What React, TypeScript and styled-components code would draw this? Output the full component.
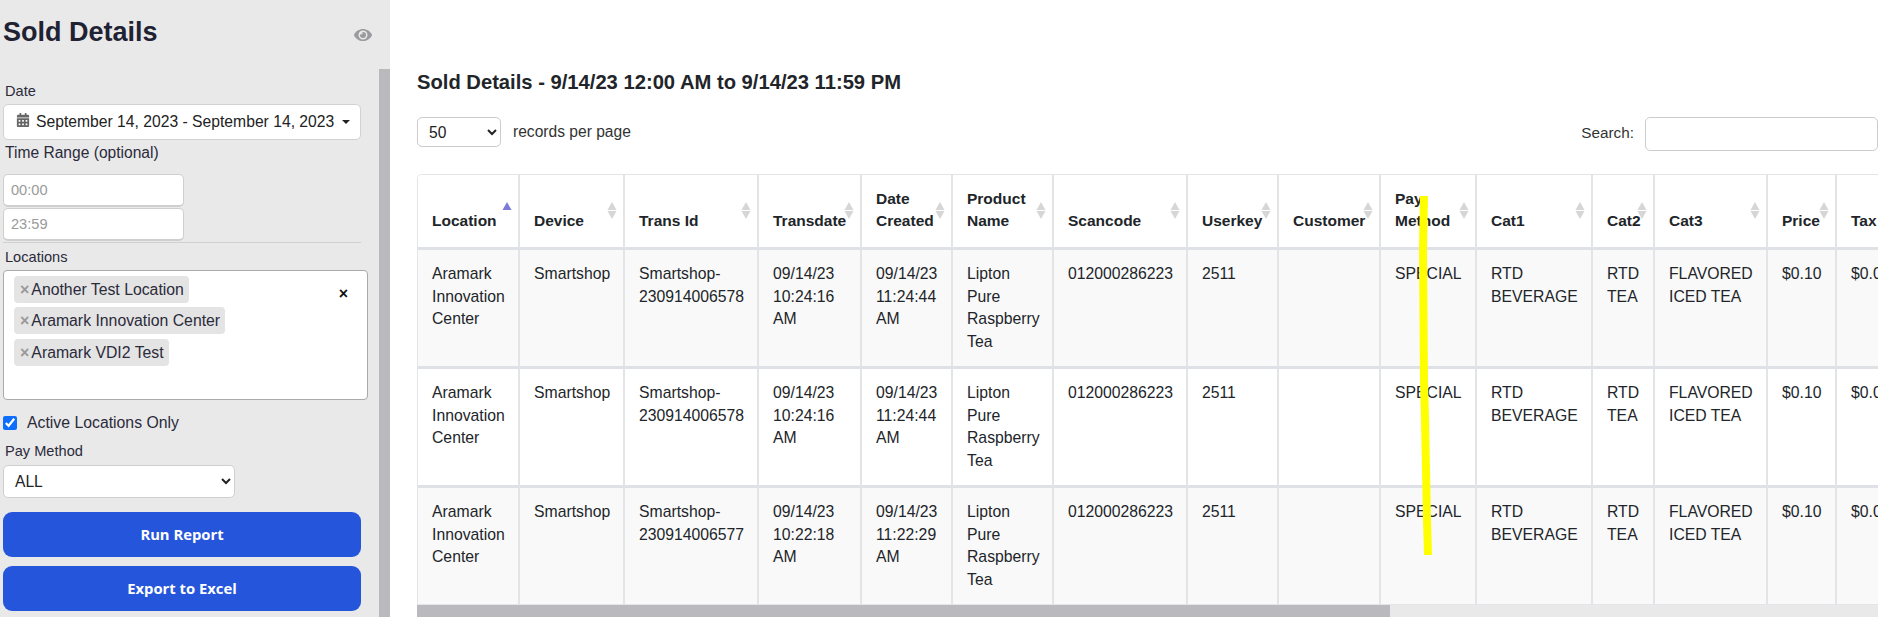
import React from "react";
import styled, { createGlobalStyle } from "styled-components";
import { FaCalendarAlt, FaEye } from "react-icons/fa";

const GlobalStyle = createGlobalStyle`
	html, body {
		margin: 0;
		padding: 0;
		width: 1890px;
		height: 617px;
		overflow: hidden;
		background: #fff;
		color: #212529;
		font-family: "Liberation Sans", Arial, sans-serif;
	}
	* {
		box-sizing: border-box;
	}
`;

const Page = styled.div`
	position: relative;
	display: flex;
	width: 1890px;
	height: 617px;
	overflow: hidden;
`;

const Sidebar = styled.aside`
	flex: 0 0 390px;
	height: 617px;
	background: #e9e9ea;
	display: flex;
	flex-direction: column;
`;

const SidebarHead = styled.div`
	flex: 0 0 69px;
	display: flex;
	align-items: flex-start;
	justify-content: space-between;
	padding: 15px 18px 0 3px;
	color: #9b9b9f;
`;

const Title = styled.h1`
	margin: 0;
	font-size: 27px;
	line-height: 34px;
	font-weight: 700;
	color: #1f2233;
`;

const EyeWrap = styled.span`
	display: block;
	margin-top: 11px;
	font-size: 18px;
	line-height: 0;
`;

const SidebarBody = styled.div`
	flex: 1;
	display: flex;
	min-height: 0;
`;

const Form = styled.div`
	flex: 1;
	padding: 13px 0 0 3px;
	min-width: 0;
`;

const SideThumb = styled.div`
	flex: 0 0 11px;
	background: #b9b9be;
`;

const FieldLabel = styled.div<{ $top?: number; $size?: number }>`
	margin: ${(p) => p.$top ?? 0}px 0 0 2px;
	font-size: ${(p) => p.$size ?? 14.6}px;
	line-height: 18px;
	color: #2b2b3a;
`;

const DateButton = styled.div`
	display: flex;
	align-items: center;
	width: 358px;
	height: 36px;
	margin-top: 4px;
	padding-left: 12px;
	background: #fff;
	border: 1px solid #d2d2d2;
	border-radius: 5px;
	font-size: 15.7px;
	color: #222;
	white-space: nowrap;
`;

const CalendarGlyph = styled.span`
	display: flex;
	margin: -5px 6px 0 0;
	font-size: 14px;
	color: #666;
`;

const Caret = styled.span`
	margin-left: 8px;
	border-top: 4px solid #222;
	border-left: 4px solid transparent;
	border-right: 4px solid transparent;
`;

const TimeInput = styled.input<{ $top?: number }>`
	display: block;
	width: 181px;
	height: 33px;
	margin-top: ${(p) => p.$top ?? 0}px;
	margin-bottom: 1px;
	padding: 0 7px;
	background: #fff;
	border: 1px solid #cfcfcf;
	border-bottom-width: 2px;
	border-radius: 5px;
	font: 14.6px "Liberation Sans", Arial, sans-serif;
	&::placeholder {
		color: #9a9a9a;
	}
`;

const Divider = styled.hr`
	width: 358px;
	margin: 1px 0 0;
	border: 0;
	border-top: 1px solid #d0d0d2;
`;

const MultiBox = styled.div`
	position: relative;
	display: flex;
	flex-direction: column;
	align-items: flex-start;
	gap: 4px;
	width: 365px;
	height: 130px;
	margin-top: 4px;
	padding: 5px 10px;
	background: #fff;
	border: 1px solid #aaa;
	border-radius: 4px;
`;

const Chip = styled.div`
	display: flex;
	align-items: center;
	height: 27px;
	padding: 0 5px 0 6px;
	background: #e4e4e4;
	border-radius: 4px;
	font-size: 15.8px;
	color: #2b2b3a;
	white-space: nowrap;
	&:last-of-type {
		margin-top: 1px;
	}
`;

const ChipClose = styled.span`
	margin-right: 2px;
	font-size: 16px;
	font-weight: 700;
	color: #999;
`;

const ClearAll = styled.span`
	position: absolute;
	top: 14px;
	right: 19px;
	font-size: 16px;
	font-weight: 700;
	color: #111;
`;

const CheckRow = styled.label`
	display: flex;
	align-items: center;
	height: 18px;
	margin-top: 14px;
	font-size: 15.8px;
	color: #2b2b3a;
`;

const CheckBox = styled.input`
	width: 14px;
	height: 14px;
	margin: 0 10px 0 0;
	accent-color: #0d6efd;
`;

const PaySelect = styled.select`
	display: block;
	width: 232px;
	height: 33px;
	margin-top: 5px;
	padding: 0 7px;
	background: #fff;
	border: 1px solid #cfcfcf;
	border-radius: 5px;
	font: 15.6px "Liberation Sans", Arial, sans-serif;
	color: #222;
`;

const ActionButton = styled.button<{ $top: number }>`
	display: block;
	width: 358px;
	height: 45px;
	margin-top: ${(p) => p.$top}px;
	padding: 0 0 2px;
	background: #2555db;
	border: 0;
	border-radius: 9px;
	color: #fff;
	font: 700 14.8px "Open Sans", sans-serif;
`;

const Main = styled.main`
	flex: 1;
	min-width: 0;
	padding: 71px 12px 0 27px;
`;

const ReportTitle = styled.h2`
	margin: 0;
	font-size: 20.2px;
	line-height: 22px;
	font-weight: 700;
	color: #212529;
`;

const Toolbar = styled.div`
	display: flex;
	align-items: flex-start;
	justify-content: space-between;
	margin-top: 24px;
	height: 57px;
	font-size: 15.6px;
	color: #333;
`;

const Group = styled.div`
	display: flex;
	align-items: center;
`;

const PageSize = styled.select`
	width: 84px;
	height: 30px;
	margin-right: 12px;
	padding: 0 7px;
	background: #fff;
	border: 1px solid #ccc;
	border-radius: 5px;
	font: 15.6px "Liberation Sans", Arial, sans-serif;
	color: #222;
`;

const SearchLabel = styled.span`
	margin-bottom: 2px;
	font-size: 15.3px;
`;

const SearchInput = styled.input`
	width: 233px;
	height: 34px;
	margin-left: 11px;
	background: #fff;
	border: 1px solid #ccc;
	border-radius: 5px;
`;

const TableClip = styled.div`
	height: 431px;
	overflow: hidden;
	border-top: 1px solid #e3e5e8;
	border-left: 1px solid #e3e5e8;
	border-bottom: 1px solid #e3e5e8;
	border-top-left-radius: 5px;
`;

const Table = styled.table`
	width: 1495px;
	table-layout: fixed;
	border-collapse: separate;
	border-spacing: 0;
	font-size: 15.75px;
	line-height: 22.7px;
`;

const HeadCell = styled.th`
	position: relative;
	height: 75px;
	padding: 0 14px 14px 14px;
	text-align: left;
	vertical-align: bottom;
	font-size: 15.5px;
	font-weight: 700;
	background: #fff;
	border-right: 2px solid #e2e4e8;
	border-bottom: 3px solid #dee2e6;
`;

const SortMark = styled.svg`
	position: absolute;
	right: 6px;
	top: 27px;
`;

const Row = styled.tr<{ $shaded: boolean }>`
	background: ${(p) => (p.$shaded ? "#f9f9f9" : "#fff")};
`;

const BodyCell = styled.td`
	height: 119px;
	padding: 13px 14px 0 14px;
	vertical-align: top;
	border-right: 2px solid #e2e4e8;
	border-bottom: 3px solid #dee2e6;
	overflow: hidden;
`;

const HScrollTrack = styled.div`
	height: 12px;
	background: #e9e9ea;
`;

const HScrollThumb = styled.div`
	width: 973px;
	height: 100%;
	background: #b9b9be;
`;

const Highlighter = styled.svg`
	position: absolute;
	left: 1410px;
	top: 190px;
	pointer-events: none;
`;

type Column = { title: string; width: number };

const columns: Column[] = [
	{ title: "Location", width: 102 },
	{ title: "Device", width: 105 },
	{ title: "Trans Id", width: 134 },
	{ title: "Transdate", width: 103 },
	{ title: "Date Created", width: 91 },
	{ title: "Product Name", width: 101 },
	{ title: "Scancode", width: 134 },
	{ title: "Userkey", width: 91 },
	{ title: "Customer", width: 102 },
	{ title: "Pay Method", width: 96 },
	{ title: "Cat1", width: 116 },
	{ title: "Cat2", width: 62 },
	{ title: "Cat3", width: 113 },
	{ title: "Price", width: 69 },
	{ title: "Tax", width: 76 },
];

const rows: string[][] = [
	["230914006578", "10:24:16", "11:24:44"],
	["230914006578", "10:24:16", "11:24:44"],
	["230914006577", "10:22:18", "11:22:29"],
].map(([id, t1, t2]) => [
	"Aramark Innovation Center",
	"Smartshop",
	`Smartshop-${id}`,
	`09/14/23 ${t1} AM`,
	`09/14/23 ${t2} AM`,
	"Lipton Pure Raspberry Tea",
	"012000286223",
	"2511",
	"",
	"SPECIAL",
	"RTD BEVERAGE",
	"RTD TEA",
	"FLAVORED ICED TEA",
	"$0.10",
	"$0.00",
]);

const SortIcon = ({ active }: { active: boolean }) => (
	<SortMark width="10" height="18" viewBox="0 0 10 18">
		<path d="M5 0 L9.5 8 L0.5 8 Z" fill={active ? "#7c7cd6" : "#d6d6d6"} />
		{!active && <path d="M5 17 L9.5 9 L0.5 9 Z" fill="#d6d6d6" />}
	</SortMark>
);

export default function App() {
	return (
		<Page>
			<GlobalStyle />
			<Sidebar>
				<SidebarHead>
					<Title>Sold Details</Title>
					<EyeWrap>
						<FaEye />
					</EyeWrap>
				</SidebarHead>
				<SidebarBody>
					<Form>
						<FieldLabel>Date</FieldLabel>
						<DateButton>
							<CalendarGlyph>
								<FaCalendarAlt />
							</CalendarGlyph>
							September 14, 2023 - September 14, 2023
							<Caret />
						</DateButton>
						<FieldLabel $top={4} $size={15.6}>
							Time Range (optional)
						</FieldLabel>
						<TimeInput placeholder="00:00" $top={12} />
						<TimeInput placeholder="23:59" />
						<Divider />
						<FieldLabel $top={5}>Locations</FieldLabel>
						<MultiBox>
							<Chip>
								<ChipClose>×</ChipClose>Another Test Location
							</Chip>
							<Chip>
								<ChipClose>×</ChipClose>Aramark Innovation Center
							</Chip>
							<Chip>
								<ChipClose>×</ChipClose>Aramark VDI2 Test
							</Chip>
							<ClearAll>×</ClearAll>
						</MultiBox>
						<CheckRow>
							<CheckBox type="checkbox" defaultChecked />
							Active Locations Only
						</CheckRow>
						<FieldLabel $top={10}>Pay Method</FieldLabel>
						<PaySelect defaultValue="ALL">
							<option>ALL</option>
						</PaySelect>
						<ActionButton $top={14}>Run Report</ActionButton>
						<ActionButton $top={9}>Export to Excel</ActionButton>
					</Form>
					<SideThumb />
				</SidebarBody>
			</Sidebar>
			<Main>
				<ReportTitle>Sold Details - 9/14/23 12:00 AM to 9/14/23 11:59 PM</ReportTitle>
				<Toolbar>
					<Group>
						<PageSize defaultValue="50">
							<option>50</option>
						</PageSize>
						records per page
					</Group>
					<Group>
						<SearchLabel>Search:</SearchLabel>
						<SearchInput />
					</Group>
				</Toolbar>
				<TableClip>
					<Table>
						<colgroup>
							{columns.map((c) => (
								<col key={c.title} style={{ width: c.width }} />
							))}
						</colgroup>
						<thead>
							<tr>
								{columns.map((c, i) => (
									<HeadCell key={c.title}>
										{c.title}
										{i < 14 && <SortIcon active={i === 0} />}
									</HeadCell>
								))}
							</tr>
						</thead>
						<tbody>
							{rows.map((r, i) => (
								<Row key={i} $shaded={i % 2 === 0}>
									{r.map((v, j) => (
										<BodyCell key={j}>{v}</BodyCell>
									))}
								</Row>
							))}
						</tbody>
					</Table>
				</TableClip>
				<HScrollTrack>
					<HScrollThumb />
				</HScrollTrack>
			</Main>
			<Highlighter width="30" height="370" viewBox="0 0 30 370">
				<path
					d="M14 6 L13 60 L14 190 L15 230 L16 280 L17 330 L18 365"
					fill="none"
					stroke="#ffff00"
					strokeWidth="8"
				/>
			</Highlighter>
		</Page>
	);
}
